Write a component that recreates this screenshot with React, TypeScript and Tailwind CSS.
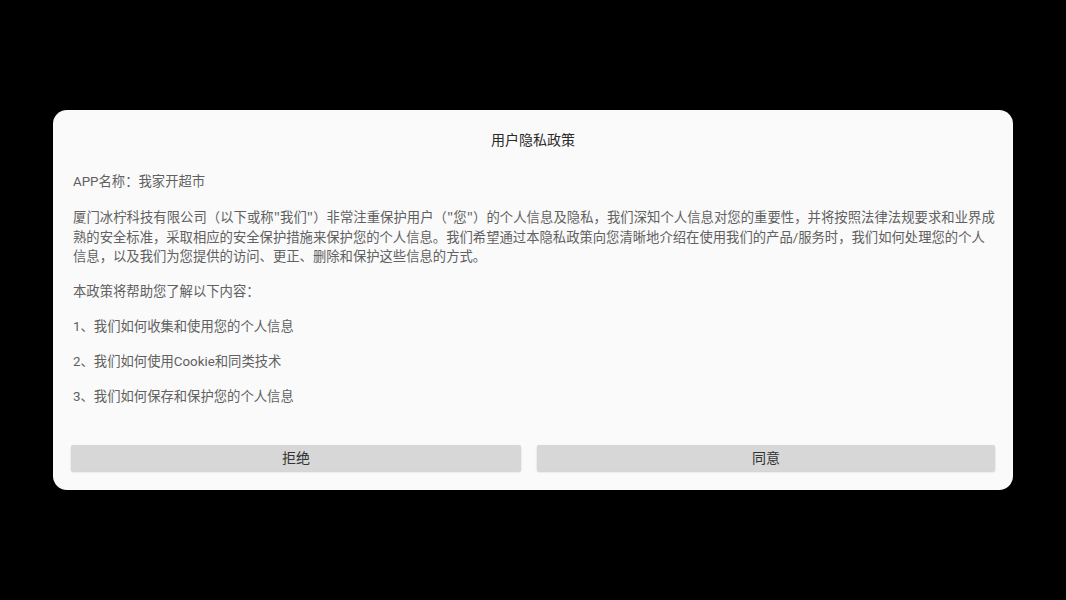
const Q = () => <span className="font-['Noto_Sans_CJK_SC',sans-serif]">"</span>;

const items = [
  "本政策将帮助您了解以下内容：",
  "1、我们如何收集和使用您的个人信息",
  "2、我们如何使用Cookie和同类技术",
  "3、我们如何保存和保护您的个人信息",
];

export default function App() {
  return (
    <div className="w-full h-[600px] bg-black pt-[110px] pl-[53px] font-['Roboto','Noto_Sans_CJK_SC',sans-serif]">
      <div className="w-[960px] h-[380px] bg-[#fafafa] rounded-[14px] flex flex-col">
        <div className="pt-[20px] h-[50px] text-center text-[14px] leading-[20px] text-[#2a2a2a]">
          用户隐私政策
        </div>
        <div className="flex-1 pl-[20px] pr-[18px] pt-[12px] flex flex-col gap-[15.5px] text-[13.33px] leading-[19.5px] text-[#616161]">
          <p>APP名称：我家开超市</p>
          <p>
            <span className="block whitespace-nowrap tracking-[0.05px]">
              厦门冰柠科技有限公司（以下或称<Q />我们<Q />）非常注重保护用户（<Q />您<Q />）的个人信息及隐私，我们深知个人信息对您的重要性，并将按照法律法规要求和业界成
            </span>
            <span className="block whitespace-nowrap">
              熟的安全标准，采取相应的安全保护措施来保护您的个人信息。我们希望通过本隐私政策向您清晰地介绍在使用我们的产品/服务时，我们如何处理您的个人
            </span>
            <span className="block whitespace-nowrap">
              信息，以及我们为您提供的访问、更正、删除和保护这些信息的方式。
            </span>
          </p>
          {items.map((t) => (
            <p key={t}>{t}</p>
          ))}
        </div>
        <div className="px-[18px] pb-[19px] flex gap-[16px]">
          <button className="w-[450px] h-[26px] bg-[#d6d7d6] rounded-[2px] shadow-[0_1px_2px_rgba(0,0,0,0.2)] text-[14px] text-[#333]">
            拒绝
          </button>
          <button className="flex-1 h-[26px] bg-[#d6d7d6] rounded-[2px] shadow-[0_1px_2px_rgba(0,0,0,0.2)] text-[14px] text-[#333]">
            同意
          </button>
        </div>
      </div>
    </div>
  );
}
